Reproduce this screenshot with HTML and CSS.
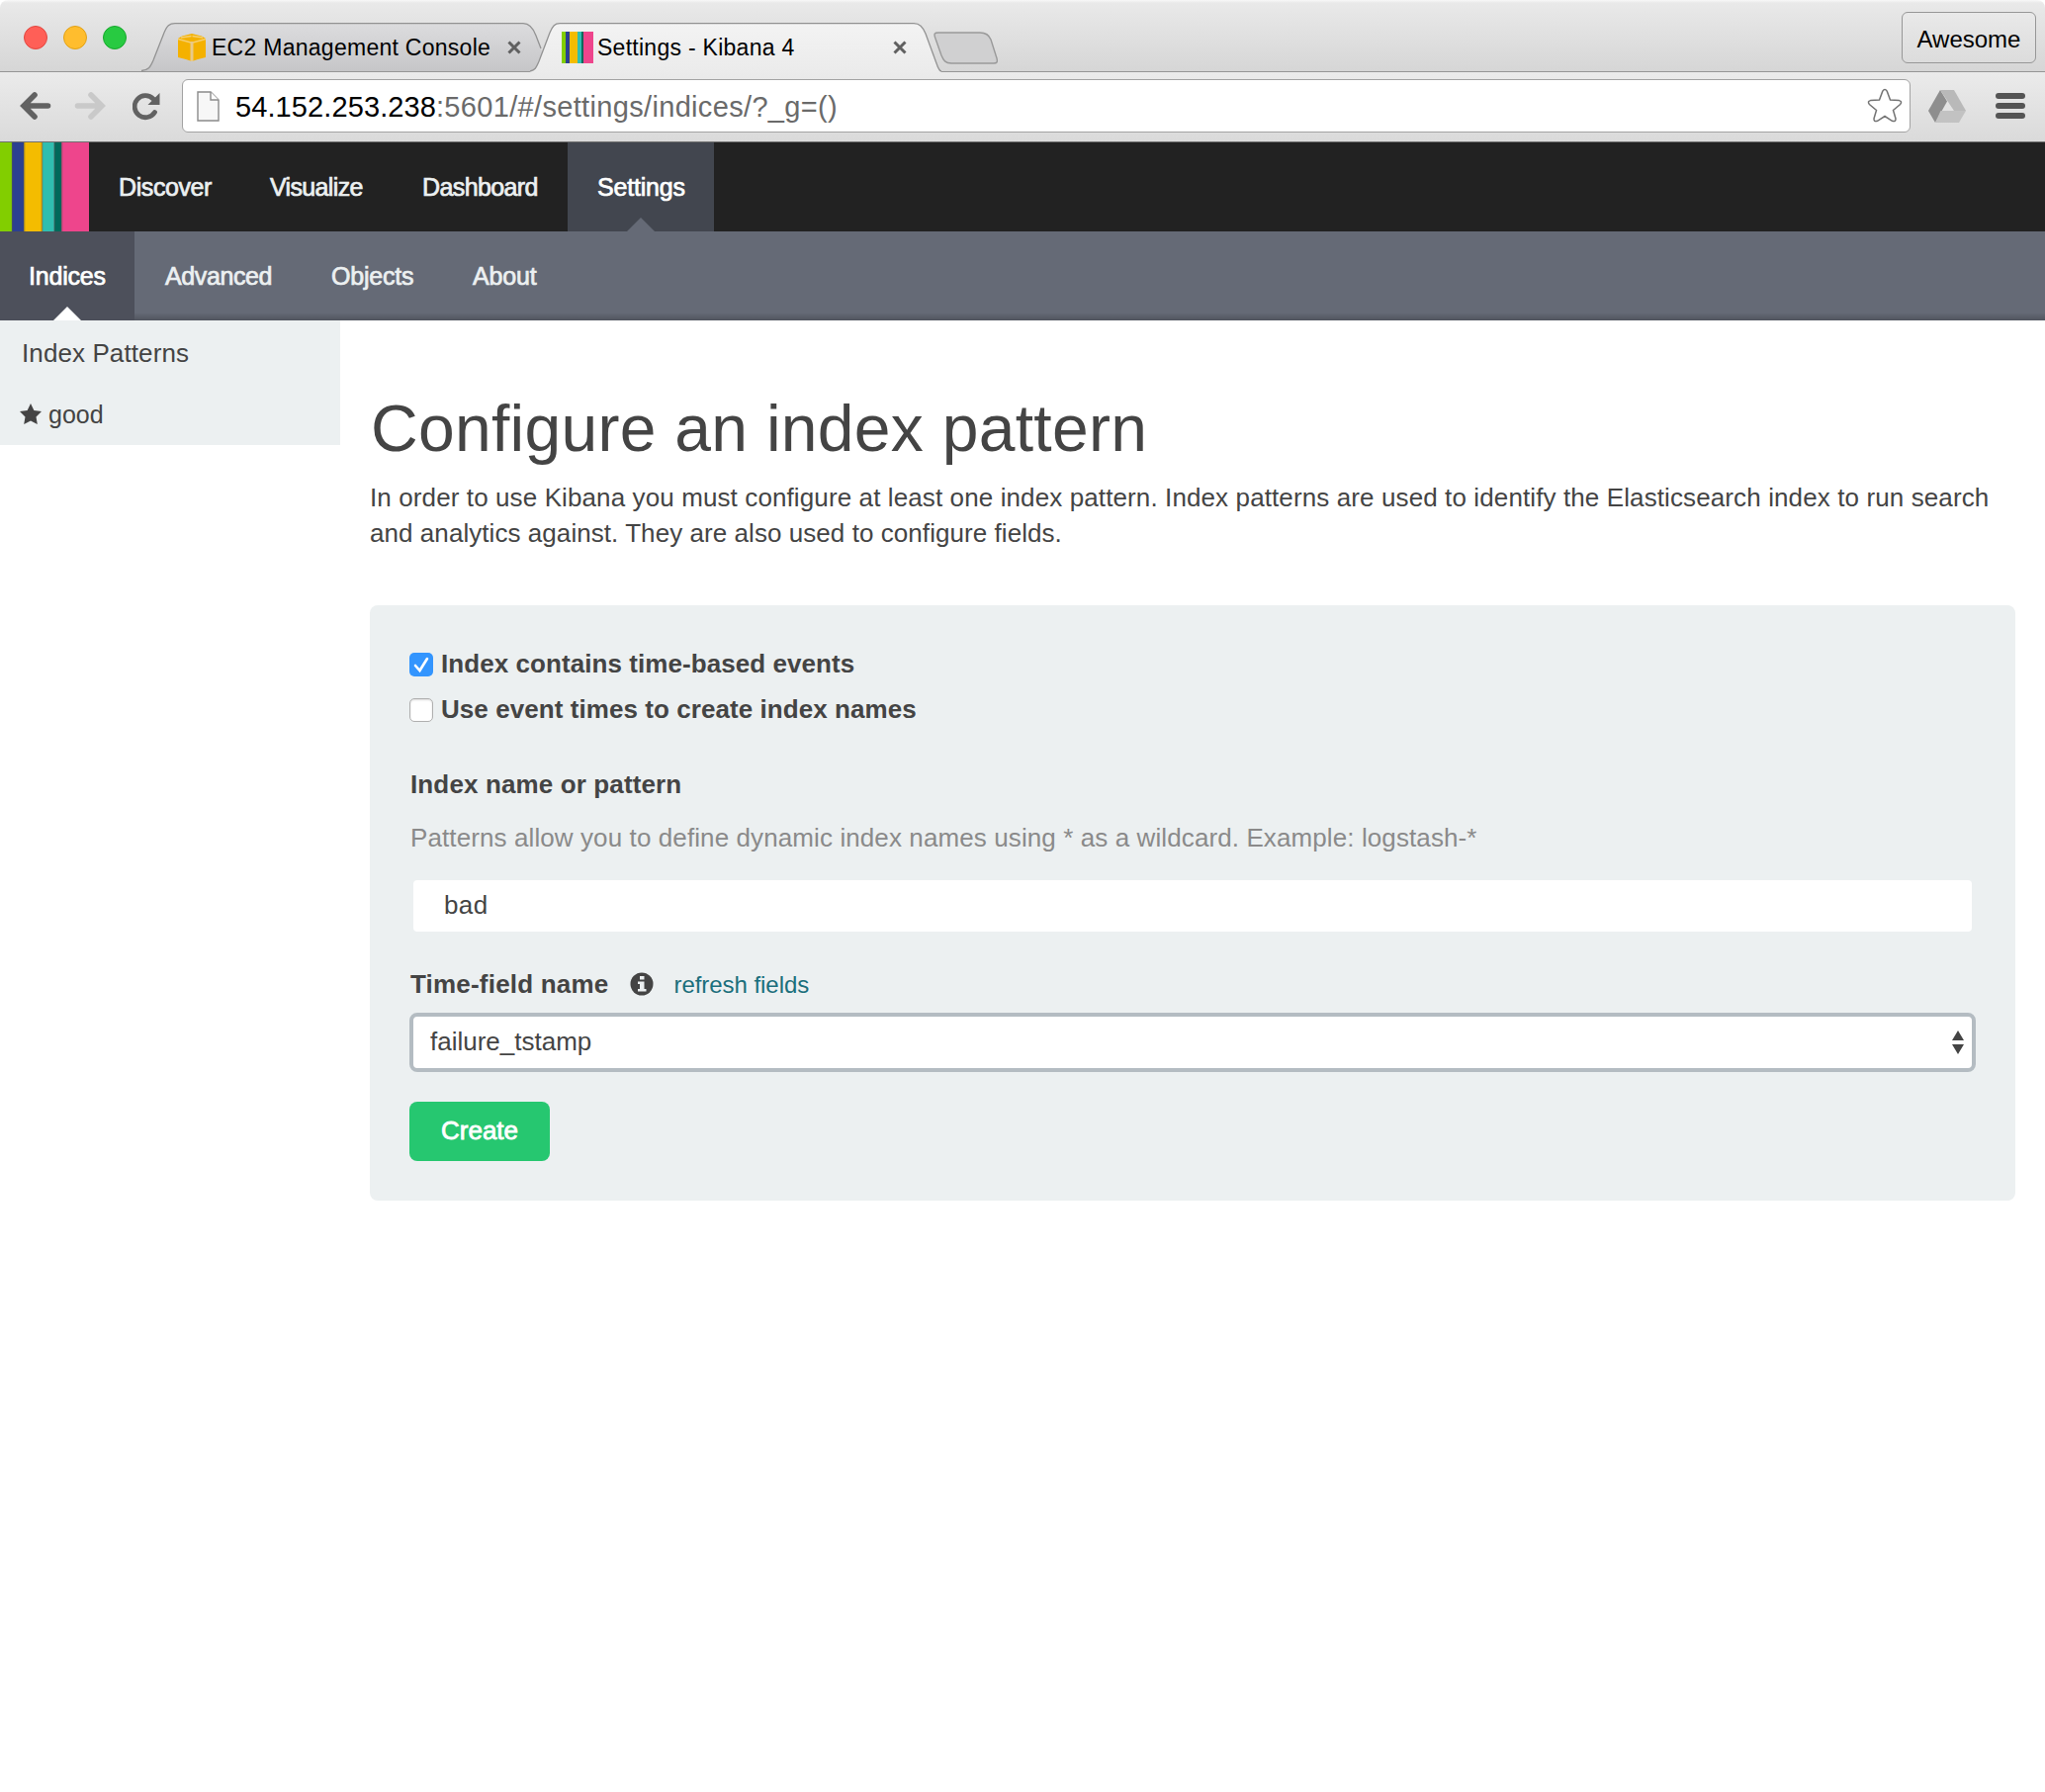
FILE: index.html
```html
<!DOCTYPE html>
<html lang="en">
<head>
<meta charset="utf-8">
<title>Settings - Kibana 4</title>
<link rel="stylesheet" href="styles.css">
</head>
<body>
<div class="browser">
  <div class="titlebar">
    <div class="lights"><span class="light red"></span><span class="light yellow"></span><span class="light green"></span></div>
    <div class="tabs">
      <div class="tab tab-back">
        <svg class="tab-shape" width="410" height="50" viewBox="0 0 410 50"><defs><linearGradient id="g1" x1="0" y1="0" x2="0" y2="1"><stop offset="0" stop-color="#dcdcde"/><stop offset="1" stop-color="#c6c6c8"/></linearGradient></defs><path d="M0 49C7 49 9 45 12 38L23 10C26 3 28 .7 34 .7H386C392 .7 396 5 399 13L410 42V49Z" fill="url(#g1)"/><path d="M0 48.500C7 48 9 45 12 38L23 10C26 3 28 .7 34 .7H386C392 .7 396 5 399 13L404 26" fill="none" stroke="#929292" stroke-width="1.300"/></svg>
        <svg class="fav" width="28" height="28" viewBox="0 0 28 28"><path d="M4 2.500L14 0l10 2.500L28 5v19l-8 2-6 2-6-2-8-2V5z" fill="#f4b100"/><path d="M0 5.500l13 3.500M28 5.500L15 9M3 4l10.500-1.500M25 4L14.500 2.500" stroke="#f6cf70" stroke-width="1.500" fill="none"/><path d="M12.500 8h3v20h-3z" fill="#e8c98a"/></svg>
        <span class="tab-title">EC2 Management Console</span>
        <svg class="close" width="14" height="14" viewBox="0 0 14 14"><path d="M1.500 1.500l11 11M12.500 1.500l-11 11"/></svg>
      </div>
      <div class="tab tab-front">
        <svg class="tab-shape" width="416" height="51" viewBox="0 0 416 51"><defs><linearGradient id="g2" x1="0" y1="0" x2="0" y2="1"><stop offset="0" stop-color="#f3f3f3"/><stop offset="1" stop-color="#ebebeb"/></linearGradient></defs><path d="M0 51V49C5 48 6 46 9 39L20 10C23 3 25 .7 30 .7H388C394 .7 397 4 400 11L411 41C414 48 415 49 416 49V51Z" fill="url(#g2)"/><path d="M0 49C5 48 6 46 9 39L20 10C23 3 25 .7 30 .7H388C394 .7 397 4 400 11L411 41C413 47 414 49 416 49" fill="none" stroke="#929292" stroke-width="1.300"/></svg>
        <svg class="fav" width="32" height="32" viewBox="0 0 32 32"><path fill="#82ce00" d="M0 0h4v32H0z"/><path fill="#2b4091" d="M4 0h4v32H4z"/><path fill="#f4bc00" d="M8 0h8v32H8z"/><path fill="#30beb0" d="M16 0h4v32h-4z"/><path fill="#00695a" d="M20 0h2v32h-2z"/><path fill="#ee458c" d="M22 0h10v32H22z"/></svg>
        <span class="tab-title">Settings - Kibana 4</span>
        <svg class="close" width="14" height="14" viewBox="0 0 14 14"><path d="M1.500 1.500l11 11M12.500 1.500l-11 11"/></svg>
      </div>
      <svg class="newtab" width="66" height="34" viewBox="0 0 66 34"><path d="M5 1H47C53 1 56 3 58 8L64 27C65 31 64 32 61 32H18C12 32 10 29 8 24L2 7C0 2 1 1 5 1Z" fill="#d0d0d1" stroke="#999" stroke-width="1.400"/></svg>
    </div>
    <div class="profile">Awesome</div>
  </div>
  <div class="toolbar">
    <svg class="nav-back" width="32" height="28" viewBox="0 0 32 28"><path d="M15 3L4 14l11 11M5 14H28.500" fill="none" stroke="#626262" stroke-width="5.600" stroke-linecap="round" stroke-linejoin="miter"/></svg>
    <svg class="nav-fwd" width="32" height="28" viewBox="0 0 32 28"><path d="M17 3l11 11-11 11M27 14H3.500" fill="none" stroke="#c9c9c9" stroke-width="5.600" stroke-linecap="round"/></svg>
    <svg class="nav-reload" width="28" height="28" viewBox="0 0 28 28"><path d="M22.500 19.500A11 11 0 1 1 21 6" fill="none" stroke="#626262" stroke-width="4.800" stroke-linecap="round"/><path d="M27.500 0V12H15.500Z" fill="#626262"/></svg>
    <div class="omnibox">
      <svg class="page-icon" width="24" height="32" viewBox="0 0 24 32"><path d="M1 1H14L22 9V30H1Z" fill="#f7f7f7" stroke="#8b8b8b" stroke-width="1.400"/><path d="M14 1V9H22" fill="#fff" stroke="#8b8b8b" stroke-width="1.400"/></svg>
      <span class="url"><span class="host">54.152.253.238</span>:5601/#/settings/indices/?_g=()</span>
      <svg class="bookmark" width="36" height="36" viewBox="0 0 36 36"><path d="M15.800 3.200Q18 0 20.200 3.200L23.500 12 32.500 12.600Q36 13.600 33.600 16.500L26.500 22.500 29 31Q29.200 34.500 25.500 33.300L18 28.500 10.500 33.300Q6.800 34.500 7 31L9.500 22.500 2.400 16.500Q0 13.600 3.500 12.600L12.500 12Z" fill="#fff" stroke="#747474" stroke-width="1.500"/></svg>
    </div>
    <svg class="drive" width="38" height="34" viewBox="0 0 38 34"><path d="M12 1L0 22l7 12L19 12.500Z" fill="#8e8e8e"/><path d="M12 1H26L38 22H26Z" fill="#b9b9b9"/><path d="M12.500 22H38L31 34H7Z" fill="#c2c2c2"/></svg>
    <svg class="menu" width="30" height="27" viewBox="0 0 30 27"><g fill="#545454"><rect y="0" width="30" height="6" rx="3"/><rect y="10" width="30" height="6" rx="3"/><rect y="20" width="30" height="6" rx="3"/></g></svg>
  </div>
</div>
<nav class="topnav">
  <svg class="logo" width="90" height="90" viewBox="0 0 90 90"><path fill="#82ce00" d="M0 0h12v90H0z"/><path fill="#2b4091" d="M12 0h12v90H12z"/><path fill="#f4bc00" d="M24 0h19v90H24z"/><path fill="#30beb0" d="M43 0h12v90H43z"/><path fill="#00695a" d="M55 0h7v90h-7z"/><path fill="#ee458c" d="M62 0h28v90H62z"/><path stroke="#555" stroke-opacity=".5" stroke-width="1.500" d="M12.500 0v90M24.500 0v90M42.500 0v90M55 0v90M62.500 0v90"/></svg>
  <a class="item discover">Discover</a>
  <a class="item visualize">Visualize</a>
  <a class="item dashboard">Dashboard</a>
  <a class="item settings active">Settings</a>
</nav>
<nav class="subnav">
  <a class="item indices active">Indices</a>
  <a class="item advanced">Advanced</a>
  <a class="item objects">Objects</a>
  <a class="item about">About</a>
</nav>
<div class="columns">
  <aside class="sidebar">
    <div class="side-title">Index Patterns</div>
    <div class="side-row"><svg width="22" height="21" viewBox="0 0 22 21"><path fill="#444" d="M11 0l3.400 6.900 7.600 1.100-5.500 5.400 1.300 7.600-6.800-3.600L4.200 21l1.300-7.600L0 8l7.600-1.100z"/></svg><span>good</span></div>
  </aside>
  <main class="content">
    <h1 class="title">Configure an index pattern</h1>
    <p class="intro"><span>In order to use Kibana you must configure at least one index pattern. Index patterns are used to identify the Elasticsearch index to run search</span><br><span class="intro-end">and analytics against. They are also used to configure fields.</span></p>
    <form class="well">
      <label class="check"><span class="box checked"><svg width="24" height="24" viewBox="0 0 24 24"><path d="M6 13l4.500 5L18 6" fill="none" stroke="#fff" stroke-width="2.600" stroke-linecap="round"/></svg></span><span>Index contains time-based events</span></label>
      <label class="check"><span class="box"></span><span>Use event times to create index names</span></label>
      <div class="label pattern-label">Index name or pattern</div>
      <div class="help">Patterns allow you to define dynamic index names using * as a wildcard. Example: logstash-*</div>
      <div class="input">bad</div>
      <div class="time-row"><span class="label time-label">Time-field name</span><svg width="24" height="24" viewBox="0 0 24 24"><circle cx="12" cy="12" r="11.500" fill="#444"/><path d="M10 4h4.500v3.500H10zM8 9.500h6.500V17H16.500v2.500H8V17h2v-5H8z" fill="#ecf0f1"/></svg><a class="refresh">refresh fields</a></div>
      <div class="select"><span>failure_tstamp</span><svg width="12" height="24" viewBox="0 0 12 24"><path fill="#444" d="M6 0l6 10H0zM6 24l6-10H0z"/></svg></div>
      <div class="create">Create</div>
    </form>
  </main>
</div>
</body>
</html>
```
FILE: styles.css
```css
* { box-sizing: border-box; }
body { margin: 0; background: #fff; color: #444; font: 26px/36px "Liberation Sans", Arial, sans-serif; }
svg { display: block; flex: none; }
span, a { white-space: nowrap; }

.browser { height: 144px; border-bottom: 1px solid #6f6f6f; color: #000; }
.titlebar { display: flex; height: 73px; border-bottom: 1px solid #969696; border-radius: 8px 8px 0 0; background: linear-gradient(#f8f8f8, #e9e9e9 3px, #d6d6d6); }
.lights { display: flex; gap: 16px; padding: 26px 0 0 24px; width: 143px; }
.light { width: 24px; height: 24px; border-radius: 50%; border: 1px solid; }
.red { background: #ff5f57; border-color: #e2463f; }
.yellow { background: #ffbd2e; border-color: #e1a116; }
.green { background: #28ca41; border-color: #17a82c; }
.tabs { display: flex; padding-top: 23px; flex: 1; }
.tab { position: relative; display: flex; height: 50px; font-size: 23px; line-height: 50px; letter-spacing: .27px; }
.tab-shape { position: absolute; left: 0; top: 0; }
.tab-back { width: 393px; padding-left: 37px; }
.tab-front { width: 416px; padding-left: 32px; z-index: 1; }
.tab > :not(.tab-shape) { position: relative; }
.tab-back .fav { margin: 11px 6px 0 0; }
.tab-front .fav { margin: 9px 4px 0 0; }
.tab-title { flex: 1; }
.close { margin-top: 18px; fill: none; stroke: #606060; stroke-width: 3; }
.tab-back .close { margin-right: 9px; }
.tab-front .close { margin-right: 35px; }
.newtab { margin: 9px 0 0 -8px; }
.profile { width: 136px; height: 52px; margin: 12px 9px 0 0; border: 1px solid #979797; border-radius: 6px; text-align: center; font-size: 24px; line-height: 53px; background: linear-gradient(#e9e9e9, #dcdcdc); }
.toolbar { display: flex; height: 70px; padding: 7px 20px 0; background: linear-gradient(#ebebeb, #dadada); }
.nav-back { margin: 13px 23px 0 0; }
.nav-fwd { margin: 13px 27px 0 0; }
.nav-reload { margin: 14px 22px 0 0; }
.omnibox { display: flex; width: 1748px; height: 54px; border: 1px solid #a3a3a3; border-radius: 6px; background: #fff; padding-left: 14px; font-size: 29px; line-height: 54px; color: #6a6a6a; letter-spacing: .33px; }
.page-icon { margin: 11px 15px 0 0; }
.host { color: #000; letter-spacing: .1px; }
.url { flex: 1; }
.bookmark { margin: 8px 7px 0 0; }
.drive { margin: 10px 30px 0 18px; }
.menu { margin-top: 14px; }

.topnav, .subnav { display: flex; height: 90px; line-height: 91px; font-size: 25px; color: #ecf0f1; -webkit-text-stroke: .7px; }
.topnav { background: #222; }
.subnav { background: linear-gradient(transparent 82px, rgba(0, 0, 0, .2)), #656a76; }
.item { position: relative; padding-left: 30px; }
.active { color: #fff; }
.active::after { content: ""; position: absolute; left: 50%; bottom: 0; margin-left: -14px; border: 14px solid transparent; border-top: 0; border-bottom-color: #656a76; }
.indices.active::after { border-bottom-color: #fff; }
.discover { width: 153px; letter-spacing: -.4px; }
.visualize { width: 154px; letter-spacing: -.65px; }
.dashboard { width: 177px; letter-spacing: -.6px; }
.settings { width: 148px; background: #42464f; letter-spacing: -.2px; }
.indices { width: 136px; padding-left: 29px; background: #4d505b; letter-spacing: -.2px; }
.advanced { width: 168px; padding-left: 31px; letter-spacing: -.4px; }
.objects { width: 143px; padding-left: 31px; letter-spacing: -.2px; }
.about { padding-left: 31px; letter-spacing: -.15px; }

.columns { display: flex; align-items: flex-start; }
.sidebar { width: 344px; height: 126px; background: #ecf0f1; }
.side-title { padding: 15px 0 0 22px; letter-spacing: .1px; }
.side-row { display: flex; padding: 26px 0 0 20px; font-size: 25px; }
.side-row svg { margin: 7px 7px 0 0; }
.content { flex: 1; padding: 72px 30px 0; }
.title { margin: 0 0 0 1px; font-size: 66px; line-height: 74px; font-weight: 400; letter-spacing: .28px; }
.intro { margin: 15px 0 55px; letter-spacing: .11px; }
.intro-end { letter-spacing: .06px; }
.well { height: 602px; padding: 41px 40px 0; border-radius: 8px; background: #ecf0f1; }
.check { display: flex; height: 46px; font-weight: 700; letter-spacing: .065px; }
.box { width: 24px; height: 24px; margin: 7px 8px 0 0; border: 1px solid #b0b0b0; border-radius: 5px; background: #fff; box-shadow: inset 0 1px 2px rgba(0, 0, 0, .15); }
.box.checked { background: #3395fe; border: 0; box-shadow: none; }
.label { font-weight: 700; letter-spacing: .13px; }
.pattern-label { margin-top: 30px; padding-left: 1px; }
.help { margin-top: 18px; padding-left: 1px; color: #8a8a8a; letter-spacing: .1px; }
.input { height: 52px; margin: 25px 4px 0; padding-left: 31px; border-radius: 4px; background: #fff; line-height: 50px; letter-spacing: .4px; }
.time-row { display: flex; height: 36px; margin-top: 35px; padding-left: 1px; }
.time-label { letter-spacing: .2px; }
.time-row svg { margin: 6px 20px 0 22px; }
.refresh { color: #1b6f7c; font-size: 24px; line-height: 38px; letter-spacing: -.05px; }
.select { display: flex; justify-content: space-between; height: 60px; margin-top: 11px; padding: 0 8px 0 17px; border: 4px solid #b4bcc2; border-radius: 8px; background: #fff; line-height: 50px; }
.select svg { margin-top: 14px; }
.create { width: 142px; height: 60px; margin-top: 30px; border-radius: 8px; background: #26c770; color: #fff; line-height: 58px; padding-left: 32px; -webkit-text-stroke: .8px; }
```
